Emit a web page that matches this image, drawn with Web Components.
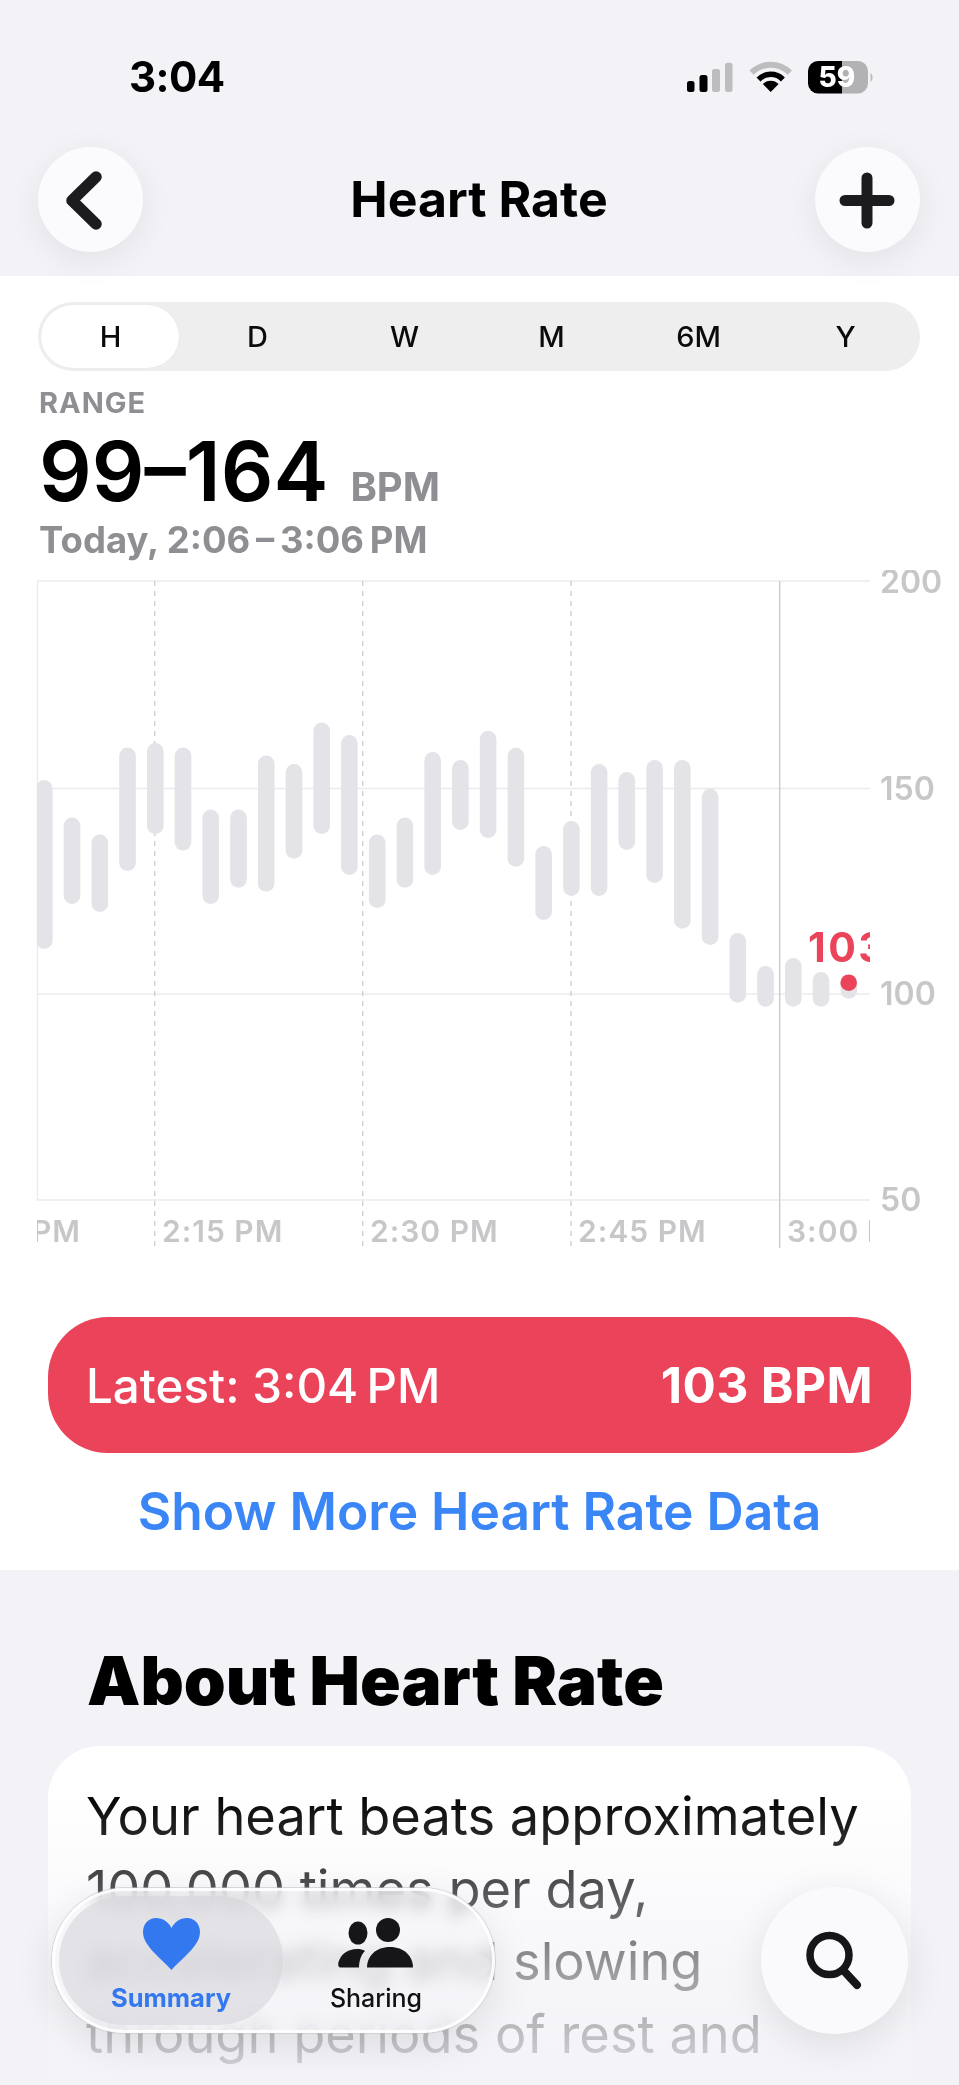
<!DOCTYPE html>
<html lang="en">
<head>
<meta charset="utf-8">
<title>Heart Rate</title>
<style>
html,body{margin:0;padding:0;background:#f2f2f7}
body{position:relative;width:959px;height:2085px;overflow:hidden;font-family:Inter,"Liberation Sans",sans-serif;color:#000;-webkit-font-smoothing:antialiased}
</style>
</head>
<body>
<top-header>
  <status-bar></status-bar>
  <nav-bar>
    <icon-button slot="left"><svg width="105" height="105" viewBox="0 0 105 105"><path d="M58 30 34 53.5 58 77" fill="none" stroke="#1c1c1e" stroke-width="11.5" stroke-linecap="round" stroke-linejoin="round"/></svg></icon-button>
    Heart Rate
    <icon-button slot="right"><svg width="105" height="105" viewBox="0 0 105 105"><path d="M52 31V76M30 53.5H74" fill="none" stroke="#1c1c1e" stroke-width="11" stroke-linecap="round"/></svg></icon-button>
  </nav-bar>
</top-header>
<main-panel>
  <seg-control></seg-control>
  <range-summary></range-summary>
  <hr-chart></hr-chart>
  <latest-pill><span slot="left">Latest: 3:04&#8201;PM</span><span slot="right">103 BPM</span></latest-pill>
  <link-row>Show More Heart Rate Data</link-row>
</main-panel>
<about-section heading="About Heart Rate">Your heart beats approximately<br>100,000 times per day,<br>accelerating and slowing<br>through periods of rest and<br>exertion. Your heart rate</about-section>
<fade-scrim></fade-scrim>
<bottom-dock>
  <tab-pill></tab-pill>
  <search-button></search-button>
</bottom-dock>
<script>
function def(name, css, html){
  customElements.define(name, class extends HTMLElement{
    connectedCallback(){
      if(this.shadowRoot) return;
      const r=this.attachShadow({mode:'open'});
      r.innerHTML='<style>'+css+'</style>'+(typeof html==='function'?html(this):html);
    }
  });
}
def('top-header',':host{display:block;position:relative;z-index:2;height:276px;background:#f2f2f7}','<slot></slot>');
def('status-bar',`:host{display:flex;justify-content:space-between;align-items:flex-start;height:147px;box-sizing:border-box;padding:53px 84px 0 129px}
.t{font-size:42px;line-height:48px;font-weight:700;letter-spacing:-.6px;color:#000}
svg{margin-top:7px;display:block}
text{font-family:Inter,"Liberation Sans",sans-serif}`,
`<div class="t">3:04</div>
<svg width="189" height="36" viewBox="0 0 189 36">
<rect x="1" y="21" width="7.5" height="11" rx="2.5"/><rect x="13.5" y="15" width="8" height="17" rx="2.5"/>
<rect x="26" y="9" width="8" height="23" rx="2.5" fill="#bdbdc0"/><rect x="39" y="2.7" width="7.5" height="29.3" rx="2.5" fill="#bdbdc0"/>
<path d="M65.6 12.6A27 27 0 0 1 103.8 12.6" fill="none" stroke="#bdbdc0" stroke-width="6"/>
<path d="M72.5 19.5A17 17 0 0 1 96.9 19.5" fill="none" stroke="#000" stroke-width="5.5"/>
<path d="M84.7 32 76.8 24A11 11 0 0 1 92.6 24Z" fill="#000"/>
<defs><clipPath id="b1"><rect x="122" y="0" width="34" height="34"/></clipPath><clipPath id="b2"><rect x="156" y="0" width="30" height="34"/></clipPath></defs>
<rect x="122" y="1" width="60" height="32.5" rx="10" fill="#000" clip-path="url(#b1)"/>
<rect x="122" y="1" width="60" height="32.5" rx="10" fill="#b2b2b5" clip-path="url(#b2)"/>
<path d="M184.5 13C187 14 187.5 20 184.5 22Z" fill="#bdbdc0"/>
<text x="151" y="27" text-anchor="middle" font-size="28" font-weight="800" fill="#fff">59</text>
</svg>`);
def('nav-bar',`:host{display:flex;justify-content:space-between;align-items:center;height:105px;padding:0 39px 0 38px;font-size:50px;font-weight:700;color:#000}
.c{flex:1;text-align:center;position:relative;top:-1px}`,
`<slot name="left"></slot><div class="c"><slot></slot></div><slot name="right"></slot>`);
def('icon-button',`:host{display:block;width:105px;height:105px;border-radius:50%;background:#fbfbfd;box-shadow:0 8px 34px rgba(0,0,0,.07)}
::slotted(svg){display:block}`,`<slot></slot>`);
def('main-panel',':host{display:block;background:#fff;padding-top:26px;height:1294px;box-sizing:border-box}','<slot></slot>');
def('seg-control',`:host{display:grid;grid-template-columns:repeat(6,147px);width:882px;height:69px;margin-left:38px;background:#eeeeef;border-radius:35px;position:relative;font-size:29px;font-weight:500;color:#0b0b0b;align-items:center;justify-items:center}
.sel{position:absolute;left:3px;top:3px;width:138px;height:63px;box-sizing:border-box;border-radius:32px;background:#fff;box-shadow:0 0 1px rgba(0,0,0,.1)}
span{position:relative;left:-1px}`,
`<div class="sel"></div><span>H</span><span>D</span><span>W</span><span>M</span><span>6M</span><span>Y</span>`);
def('range-summary',`:host{display:block;padding:15px 0 0 39px}
.r{font-size:29px;line-height:34px;font-weight:700;color:#8e8e93;letter-spacing:1px}
.v{margin-top:11px;height:80px;line-height:80px;font-size:82.5px;font-weight:600;display:flex;align-items:baseline;gap:22px}
.u{font-size:40px;line-height:40px;font-weight:700;color:#8e8e93}
.d{margin-top:9px;font-size:36.5px;line-height:40px;font-weight:700;color:#8e8e93}`,
`<div class="r">RANGE</div><div class="v">99–164<span class="u">BPM</span></div><div class="d">Today, 2:06&#8201;–&#8201;3:06&#8201;PM</div>`);
def('hr-chart',`:host{display:block;height:690px;margin-top:10px}
svg{display:block}
text{font-family:Inter,"Liberation Sans",sans-serif}
.ax{font-size:32px;font-weight:600;fill:#c7c7c9}
.tm{font-size:30px;font-weight:600;fill:#c7c7c9;letter-spacing:1px}
.last{word-spacing:-1px}
.red{font-size:41px;font-weight:700;fill:#ea435a;letter-spacing:2.5px}`,
()=>{
  const bars=[[780,949],[817.6,904],[834.5,912],[747.5,871],[743,834],[747.5,850.6],[809.5,904],[809.5,887.7],[755.5,891.7],[764,858.7],[722.5,834],[735,875],[834.5,908],[817.6,887.7],[752,875],[760,830],[730.7,838],[747.7,866.7],[846,920],[821,896],[764,896],[772,850],[760,883],[760,928.7],[788.7,945],[933,1002.7],[966,1006.7],[958,1006.7],[972,1006.7],[975,998.7]];
  let b='';
  bars.forEach((p,i)=>{const cx=44.3+27.74*i;b+=`<rect x="${(cx-8.3).toFixed(1)}" y="${p[0]}" width="16.6" height="${(p[1]-p[0]).toFixed(1)}" rx="8.3" fill="#e4e4e8"/>`});
  let g='';
  [581,788.5,994,1200].forEach(y=>{g+=`<line x1="37" x2="870" y1="${y}" y2="${y}" stroke="#ebebed" stroke-width="1.4"/>`});
  g+=`<line x1="37.5" x2="37.5" y1="581" y2="1200" stroke="#ebebed" stroke-width="1.4"/>`;
  [154.7,362.7,571].forEach(x=>{g+=`<line x1="${x}" x2="${x}" y1="581" y2="1248" stroke="#cfcfd2" stroke-width="1.4" stroke-dasharray="5 5"/>`});
  g+=`<line x1="779.7" x2="779.7" y1="581" y2="1248" stroke="#cbcbce" stroke-width="1.4"/>`;
  return `<svg width="959" height="690" viewBox="0 570 959 690">
  <defs><clipPath id="plot"><rect x="37" y="570" width="833" height="690"/></clipPath></defs>
  ${g}
  <g clip-path="url(#plot)">${b}
  <text class="red" x="808" y="962">103</text>
  <circle cx="848.7" cy="982.7" r="8.300" fill="#ea435a"/>
  <text class="tm" x="81" y="1242" text-anchor="end">PM</text>
  <text class="tm" x="162" y="1242">2:15 PM</text>
  <text class="tm" x="370" y="1242">2:30 PM</text>
  <text class="tm" x="578" y="1242">2:45 PM</text>
  <text class="tm last" x="787" y="1242">3:00 PM</text>
  </g>
  <text class="ax" x="880" y="593">200</text>
  <text class="ax" x="880" y="799.500">150</text>
  <text class="ax" x="880" y="1005">100</text>
  <text class="ax" x="880" y="1211">50</text>
  </svg>`;
});
def('latest-pill',`:host{display:flex;justify-content:space-between;align-items:center;margin:57px 48px 0;height:136px;padding:0 38px 0 38px;border-radius:60px;background:#ea435a;color:#fff;font-size:47.5px}
.l{font-weight:500}.r{font-weight:700;font-size:49.5px;letter-spacing:.4px}`,
`<span class="l"><slot name="left"></slot></span><span class="r"><slot name="right"></slot></span>`);
def('link-row',`:host{display:block;margin-top:28px;text-align:center;font-size:51.5px;line-height:60px;font-weight:600;color:#3a86f6}`,'<slot></slot>');
customElements.define('about-section',class extends HTMLElement{
  connectedCallback(){
    if(this.shadowRoot) return;
    const r=this.attachShadow({mode:'open'});
    r.innerHTML=`<style>:host{display:block;background:#f2f2f7;padding:73px 48px 0}
    h2{margin:0 0 27px 39px;font-size:67.2px;line-height:76px;font-weight:900;color:#000}
    .card{background:#fff;border-radius:52px;padding:34px 20px 60px 38px;font-size:52.4px;line-height:72.5px;color:#000;white-space:nowrap}</style>
    <h2>${this.getAttribute('heading')}</h2><div class="card"><slot></slot></div>`;
  }
});
def('fade-scrim',`:host{display:block;position:absolute;left:0;right:0;top:1790px;height:295px;pointer-events:none;background:linear-gradient(to bottom,rgba(242,242,247,0) 0,rgba(242,242,247,.35) 100px,rgba(242,242,247,.65) 185px,rgba(242,242,247,.9) 295px)}`,'');
def('bottom-dock',`:host{display:flex;justify-content:space-between;align-items:center;position:absolute;left:52px;right:51px;top:1887px;height:147px}`,'<slot></slot>');
def('tab-pill',`:host{display:flex;position:relative;box-sizing:border-box;width:443px;height:145px;border-radius:73px;background:rgba(250,250,252,.7);-webkit-backdrop-filter:blur(8px) brightness(.7) contrast(2.4);backdrop-filter:blur(8px) brightness(.7) contrast(2.4);box-shadow:0 0 0 1px rgba(190,190,195,.55),inset 0 0 0 3px rgba(255,255,255,.85),0 12px 40px rgba(0,0,0,.1);padding:8px 7px;font-size:25px}
.tab{display:flex;flex-direction:column;align-items:center;height:129px;box-sizing:border-box;padding-top:22px;color:#111;font-weight:500}
.a{width:224px;border-radius:65px;background:rgba(215,215,220,.62);color:#3478f0;font-weight:700;font-size:25.5px}
.b{width:186px}
svg{display:block}
.lab{margin-top:13px;line-height:30px}`,
`<div class="tab a"><svg width="57" height="52" viewBox="0 0 57 52"><path d="M28.5 52C18 40 0 28 0 14 0 5.500 6 0 13 0 20 0 25.500 4 28.500 10 31.500 4 37 0 44 0 51 0 57 5.500 57 14 57 28 39 40 28.500 52Z" fill="#3478f0"/></svg><div class="lab">Summary</div></div>
<div class="tab b"><svg width="76" height="52" viewBox="0 0 76 52" fill="#161618"><ellipse cx="20" cy="15" rx="9.500" ry="11.500"/><ellipse cx="50" cy="12" rx="12" ry="12"/><path d="M29 49.500C29 38 38 29 52 29 66 29 75 38 75 49.500Z"/><path d="M3 49.500C0 49.500 0 47 .5 44 3 36 10 31 19 31 22 31 25 31.500 27 33 23 37 21 43 21 49.500Z"/></svg><div class="lab">Sharing</div></div>`);
def('search-button',`:host{display:block;width:147px;height:147px;border-radius:50%;background:#fafafc;box-shadow:0 10px 40px rgba(0,0,0,.1)}
svg{display:block}`,
`<svg width="147" height="147" viewBox="0 0 147 147"><circle cx="68.500" cy="68" r="19.500" fill="none" stroke="#161618" stroke-width="7.500"/><path d="M83 84 96 98" stroke="#161618" stroke-width="8" stroke-linecap="round"/></svg>`);
</script>
</body>
</html>
